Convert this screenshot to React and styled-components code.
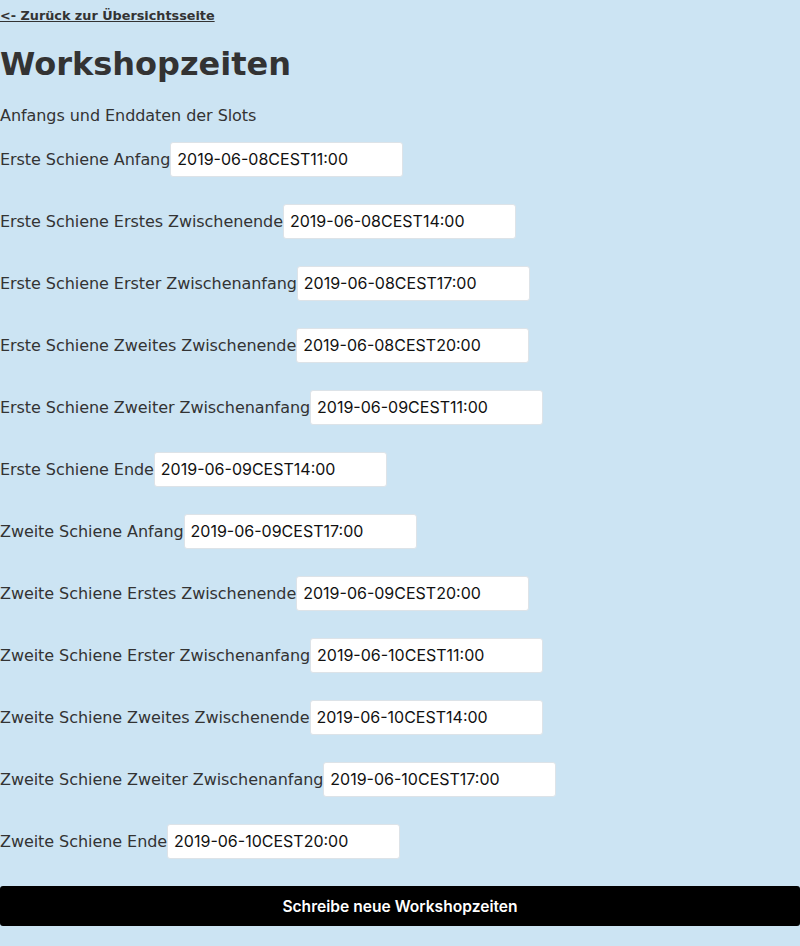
import React from "react";
import styled, { createGlobalStyle } from "styled-components";

const Global = createGlobalStyle`
  html, body { margin: 0; padding: 0; background: #cce4f3; }
  body { font-family: "DejaVu Sans", sans-serif; color: #333; }
`;

const Page = styled.div`
  display: flex;
  flex-direction: column;
  width: 800px;
  padding-bottom: 20px;
`;

const BackLink = styled.a`
  display: block;
  margin-top: 8px;
  font-size: 12.8px;
  font-weight: bold;
  color: #333;
  text-decoration: underline;
  line-height: normal;
  align-self: flex-start;
`;

const Title = styled.h1`
  margin: 22px 0 0;
  font-size: 32px;
  font-weight: bold;
  line-height: normal;
  color: #333;
`;

const Subtitle = styled.p`
  margin: 23px 0 0;
  font-size: 16px;
  line-height: normal;
  letter-spacing: -0.06px;
`;

const Form = styled.form`
  display: flex;
  flex-direction: column;
  gap: 28px;
  margin-top: 17px;
`;

const Row = styled.div`
  display: flex;
  align-items: center;
  height: 34px;
`;

const Label = styled.label`
  font-size: 16px;
  line-height: normal;
  letter-spacing: -0.06px;
  color: #333;
  white-space: nowrap;
`;

const Input = styled.input`
  box-sizing: border-box;
  width: 233px;
  height: 35px;
  padding: 0 6px;
  border: 1px solid #dde3e8;
  border-radius: 3px;
  background: #fff;
  font-family: Inter, sans-serif;
  font-size: 16px;
  color: #111;
  outline: none;
`;

const Submit = styled.button`
  margin-top: 28px;
  height: 40px;
  width: 100%;
  border: none;
  border-radius: 3px;
  background: #000;
  color: #fff;
  font-family: Inter, sans-serif;
  font-weight: 600;
  font-size: 15.6px;
  cursor: pointer;
`;

const fields = [
  ["Erste Schiene Anfang", "2019-06-08CEST11:00"],
  ["Erste Schiene Erstes Zwischenende", "2019-06-08CEST14:00"],
  ["Erste Schiene Erster Zwischenanfang", "2019-06-08CEST17:00"],
  ["Erste Schiene Zweites Zwischenende", "2019-06-08CEST20:00"],
  ["Erste Schiene Zweiter Zwischenanfang", "2019-06-09CEST11:00"],
  ["Erste Schiene Ende", "2019-06-09CEST14:00"],
  ["Zweite Schiene Anfang", "2019-06-09CEST17:00"],
  ["Zweite Schiene Erstes Zwischenende", "2019-06-09CEST20:00"],
  ["Zweite Schiene Erster Zwischenanfang", "2019-06-10CEST11:00"],
  ["Zweite Schiene Zweites Zwischenende", "2019-06-10CEST14:00"],
  ["Zweite Schiene Zweiter Zwischenanfang", "2019-06-10CEST17:00"],
  ["Zweite Schiene Ende", "2019-06-10CEST20:00"],
];

export default function App() {
  return (
    <>
      <Global />
      <Page>
        <BackLink href="#">&lt;- Zurück zur Übersichtsseite</BackLink>
        <Title>Workshopzeiten</Title>
        <Subtitle>Anfangs und Enddaten der Slots</Subtitle>
        <Form onSubmit={(e) => e.preventDefault()}>
          {fields.map(([label, value], i) => (
            <Row key={i}>
              <Label htmlFor={`f${i}`}>{label}</Label>
              <Input id={`f${i}`} defaultValue={value} />
            </Row>
          ))}
        </Form>
        <Submit type="button">Schreibe neue Workshopzeiten</Submit>
      </Page>
    </>
  );
}
